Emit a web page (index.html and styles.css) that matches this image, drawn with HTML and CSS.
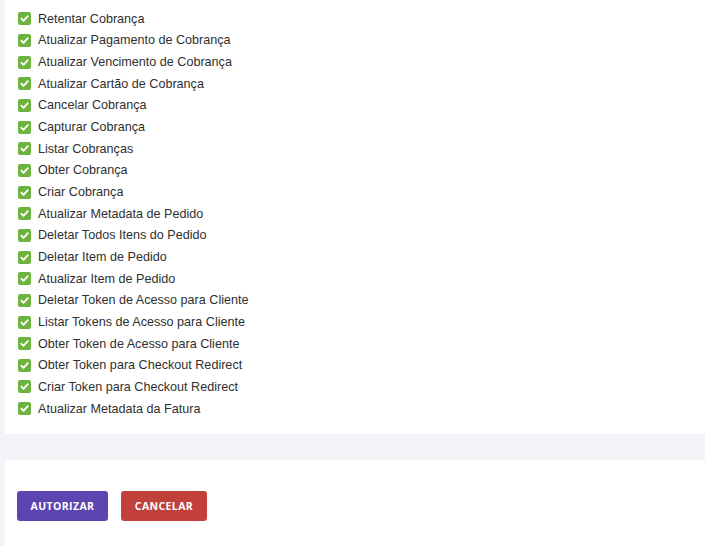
FILE: index.html
```html
<!DOCTYPE html>
<html lang="pt-BR">
<head>
<meta charset="utf-8">
<title>Autorizar</title>
<link rel="stylesheet" href="styles.css">
</head>
<body>
<div class="wrap">
  <div class="card">
    <ul class="scopes">
      <li class="scope"><span class="check"><svg viewBox="0 0 13 13"><path d="M3.3 6.7 L5.5 8.9 L9.8 4.2" /></svg></span>Retentar Cobrança</li>
      <li class="scope"><span class="check"><svg viewBox="0 0 13 13"><path d="M3.3 6.7 L5.5 8.9 L9.8 4.2" /></svg></span>Atualizar Pagamento de Cobrança</li>
      <li class="scope"><span class="check"><svg viewBox="0 0 13 13"><path d="M3.3 6.7 L5.5 8.9 L9.8 4.2" /></svg></span>Atualizar Vencimento de Cobrança</li>
      <li class="scope"><span class="check"><svg viewBox="0 0 13 13"><path d="M3.3 6.7 L5.5 8.9 L9.8 4.2" /></svg></span>Atualizar Cartão de Cobrança</li>
      <li class="scope"><span class="check"><svg viewBox="0 0 13 13"><path d="M3.3 6.7 L5.5 8.9 L9.8 4.2" /></svg></span>Cancelar Cobrança</li>
      <li class="scope"><span class="check"><svg viewBox="0 0 13 13"><path d="M3.3 6.7 L5.5 8.9 L9.8 4.2" /></svg></span>Capturar Cobrança</li>
      <li class="scope"><span class="check"><svg viewBox="0 0 13 13"><path d="M3.3 6.7 L5.5 8.9 L9.8 4.2" /></svg></span>Listar Cobranças</li>
      <li class="scope"><span class="check"><svg viewBox="0 0 13 13"><path d="M3.3 6.7 L5.5 8.9 L9.8 4.2" /></svg></span>Obter Cobrança</li>
      <li class="scope"><span class="check"><svg viewBox="0 0 13 13"><path d="M3.3 6.7 L5.5 8.9 L9.8 4.2" /></svg></span>Criar Cobrança</li>
      <li class="scope"><span class="check"><svg viewBox="0 0 13 13"><path d="M3.3 6.7 L5.5 8.9 L9.8 4.2" /></svg></span>Atualizar Metadata de Pedido</li>
      <li class="scope"><span class="check"><svg viewBox="0 0 13 13"><path d="M3.3 6.7 L5.5 8.9 L9.8 4.2" /></svg></span>Deletar Todos Itens do Pedido</li>
      <li class="scope"><span class="check"><svg viewBox="0 0 13 13"><path d="M3.3 6.7 L5.5 8.9 L9.8 4.2" /></svg></span>Deletar Item de Pedido</li>
      <li class="scope"><span class="check"><svg viewBox="0 0 13 13"><path d="M3.3 6.7 L5.5 8.9 L9.8 4.2" /></svg></span>Atualizar Item de Pedido</li>
      <li class="scope"><span class="check"><svg viewBox="0 0 13 13"><path d="M3.3 6.7 L5.5 8.9 L9.8 4.2" /></svg></span>Deletar Token de Acesso para Cliente</li>
      <li class="scope"><span class="check"><svg viewBox="0 0 13 13"><path d="M3.3 6.7 L5.5 8.9 L9.8 4.2" /></svg></span>Listar Tokens de Acesso para Cliente</li>
      <li class="scope"><span class="check"><svg viewBox="0 0 13 13"><path d="M3.3 6.7 L5.5 8.9 L9.8 4.2" /></svg></span>Obter Token de Acesso para Cliente</li>
      <li class="scope"><span class="check"><svg viewBox="0 0 13 13"><path d="M3.3 6.7 L5.5 8.9 L9.8 4.2" /></svg></span>Obter Token para Checkout Redirect</li>
      <li class="scope"><span class="check"><svg viewBox="0 0 13 13"><path d="M3.3 6.7 L5.5 8.9 L9.8 4.2" /></svg></span>Criar Token para Checkout Redirect</li>
      <li class="scope"><span class="check"><svg viewBox="0 0 13 13"><path d="M3.3 6.7 L5.5 8.9 L9.8 4.2" /></svg></span>Atualizar Metadata da Fatura</li>
    </ul>
  </div>
  <div class="gap"></div>
  <div class="card footer">
    <button class="btn btn-primary" type="button">Autorizar</button>
    <button class="btn btn-danger" type="button">Cancelar</button>
  </div>
</div>
</body>
</html>
```

FILE: styles.css
```css
html, body {
  margin: 0;
  padding: 0;
  background: #ffffff;
}
body {
  font-family: "Liberation Sans", Arial, sans-serif;
  color: #333333;
}
.wrap {
  width: 700px;
  padding-left: 5px;
  background: #f3f4f7;
  min-height: 546px;
  display: flex;
  flex-direction: column;
}
.card {
  background: #ffffff;
}
.scopes {
  list-style: none;
  margin: 0;
  padding: 8px 0 15px 13px;
}
.scope {
  display: flex;
  align-items: center;
  height: 21.67px;
  font-size: 12.6px;
  color: #2f2f2f;
}
.check {
  width: 13px;
  height: 13px;
  border-radius: 2px;
  background: #6db33f;
  margin-right: 7px;
  display: flex;
  flex: none;
}
.check svg {
  width: 13px;
  height: 13px;
}
.check path {
  fill: none;
  stroke: #ffffff;
  stroke-width: 1.8;
  stroke-linecap: round;
  stroke-linejoin: round;
}
.gap {
  height: 26px;
}
.footer {
  flex: 1;
  padding: 31px 0 0 12px;
  display: flex;
  align-items: flex-start;
  gap: 13px;
}
.btn {
  border: none;
  border-radius: 3px;
  height: 30px;
  padding: 0;
  font-family: "Open Sans", "Liberation Sans", sans-serif;
  font-weight: 700;
  font-size: 10.5px;
  letter-spacing: 0.4px;
  text-transform: uppercase;
  color: #ffffff;
  cursor: pointer;
}
.btn-primary {
  background: #5c45b1;
  width: 91px;
}
.btn-danger {
  background: #c1403b;
  width: 86px;
}
```
